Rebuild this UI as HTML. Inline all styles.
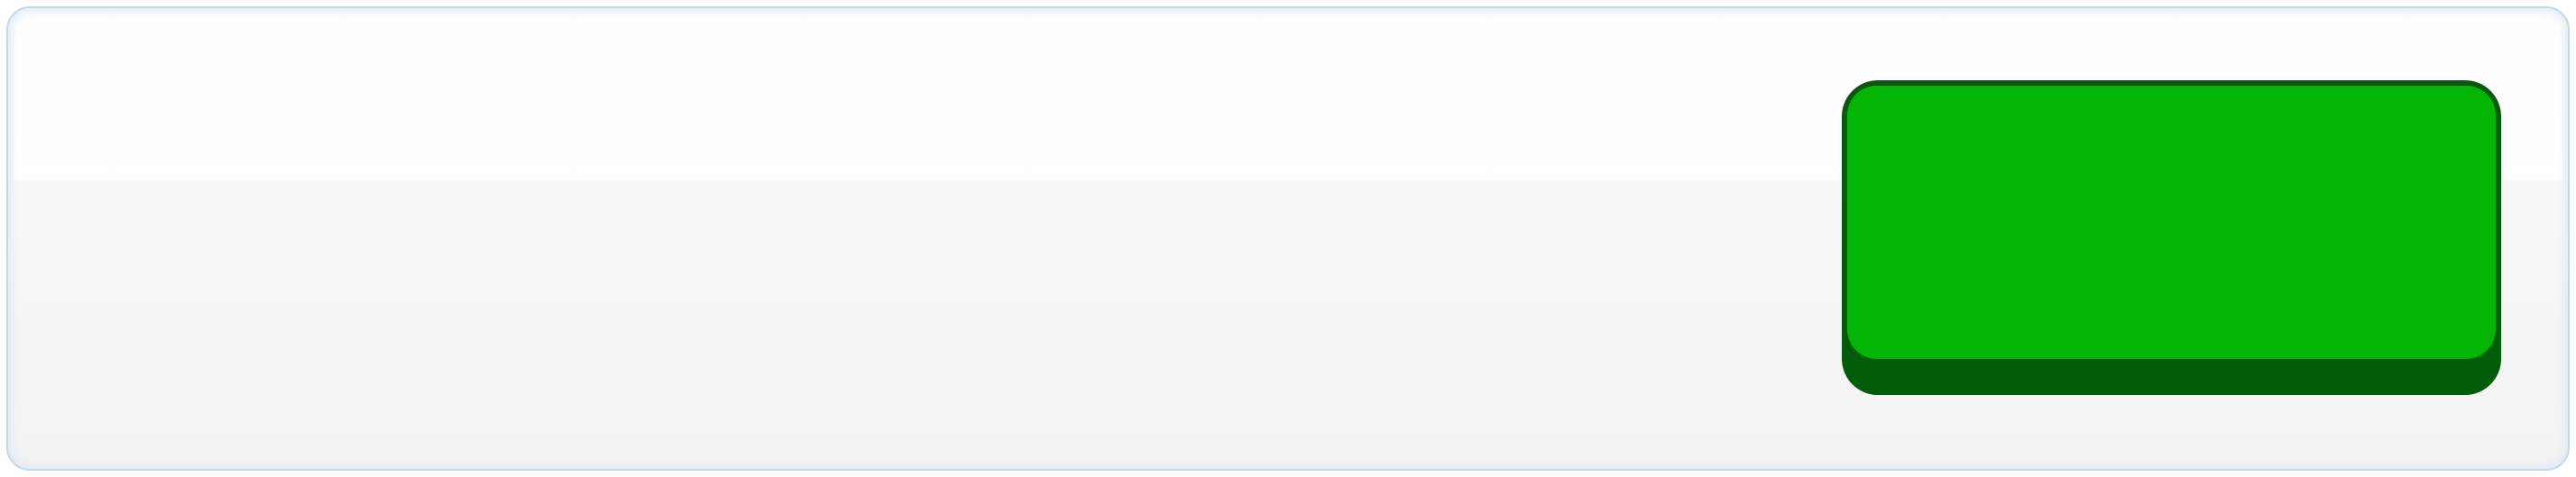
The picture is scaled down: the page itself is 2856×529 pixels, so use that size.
<!DOCTYPE html>
<html><head><style>
html,body{margin:0;padding:0;width:2856px;height:529px;background:#fff;overflow:hidden}
.panel{position:absolute;left:7px;top:7px;width:2838px;height:511px;border-radius:26px;
border:2px solid #c4d8ec;
background:linear-gradient(#fdfdfd 0px,#fefefe 150px,#fff 190px,#f8f8f8 191px,#f2f2f2 511px);
box-shadow:inset 0 0 10px 3px #dde9f5;}
.btn{position:absolute;left:2042px;top:89px;width:731px;height:349px;border-radius:40px;background:#005c08}
.face{position:absolute;left:6px;top:6px;width:719px;height:303px;border-radius:33px;background:#04b604}
</style></head><body>
<div class="panel"></div>
<div class="btn"><div class="face"></div></div>
</body></html>
